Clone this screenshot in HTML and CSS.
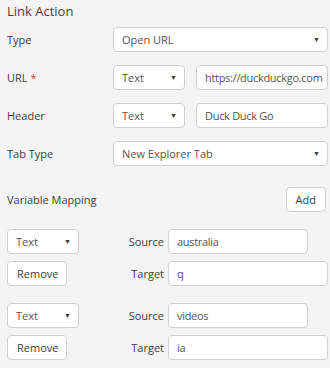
FILE: index.html
```html
<!DOCTYPE html>
<html lang="en">
<head>
    <meta charset="UTF-8">
    <meta name="viewport" content="width=device-width, initial-scale=1.0">
    <title>Link Action</title>
    <link rel="stylesheet" href="styles.css">
</head>
<body>
    <!-- Link action editor panel -->
    <div class="panel">
        <h2 class="panel-title">Link Action</h2>

        <div class="form-row">
            <label class="form-label">Type</label>
            <div class="select">
                <span class="select-value">Open URL</span>
                <span class="caret">&#9660;</span>
            </div>
        </div>

        <div class="form-row">
            <label class="form-label">URL <span class="required">*</span></label>
            <div class="pair">
                <div class="select select-small">
                    <span class="select-value">Text</span>
                    <span class="caret">&#9660;</span>
                </div>
                <input class="text-input" type="text" value="https://duckduckgo.com">
            </div>
        </div>

        <div class="form-row">
            <label class="form-label">Header</label>
            <div class="pair">
                <div class="select select-small">
                    <span class="select-value">Text</span>
                    <span class="caret">&#9660;</span>
                </div>
                <input class="text-input" type="text" value="Duck Duck Go">
            </div>
        </div>

        <div class="form-row">
            <label class="form-label">Tab Type</label>
            <div class="select">
                <span class="select-value">New Explorer Tab</span>
                <span class="caret">&#9660;</span>
            </div>
        </div>

        <!-- Variable mapping header -->
        <div class="mapping-header">
            <span class="form-label">Variable Mapping</span>
            <button class="btn">Add</button>
        </div>

        <!-- Mapping entries -->
        <div class="mapping">
            <div class="select select-small">
                <span class="select-value">Text</span>
                <span class="caret">&#9660;</span>
            </div>
            <span class="mapping-label">Source</span>
            <input class="text-input source-input" type="text" value="australia">
            <button class="btn">Remove</button>
            <span class="mapping-label">Target</span>
            <input class="text-input" type="text" value="q">
        </div>

        <div class="mapping">
            <div class="select select-small">
                <span class="select-value">Text</span>
                <span class="caret">&#9660;</span>
            </div>
            <span class="mapping-label">Source</span>
            <input class="text-input source-input" type="text" value="videos">
            <button class="btn">Remove</button>
            <span class="mapping-label">Target</span>
            <input class="text-input" type="text" value="ia">
        </div>
    </div>
</body>
</html>
```

FILE: styles.css
```css
/* Basic Reset */
* {
    margin: 0;
    padding: 0;
    box-sizing: border-box;
}

body {
    font-family: "Open Sans", "Noto Sans", sans-serif;
    font-size: 11px;
    color: #404040;
    background-color: #f4f4f4;
}

/* Panel */
.panel {
    padding: 2px 2px 0 7px;
}

.panel-title {
    font-size: 13px;
    font-weight: normal;
    color: #444444;
    line-height: 18px;
    margin-bottom: 7px;
}

/* Form rows */
.form-row {
    display: grid;
    grid-template-columns: 106px 1fr;
    align-items: center;
    margin-bottom: 13px;
}

.required {
    color: #e0413a;
}

.pair {
    display: grid;
    grid-template-columns: 72px 1fr;
    gap: 11px;
}

/* Fake select box */
.select {
    display: flex;
    align-items: center;
    justify-content: space-between;
    height: 25px;
    padding: 0 7px 0 8px;
    background-color: #ffffff;
    border: 1px solid #d0d0d0;
    border-radius: 4px;
    color: #555555;
}

.caret {
    font-size: 7px;
    color: #3a3a3a;
}

.text-input {
    height: 25px;
    width: 100%;
    padding: 0 4px 0 8px;
    font-family: inherit;
    font-size: inherit;
    letter-spacing: -0.3px;
    color: #555555;
    background-color: #ffffff;
    border: 1px solid #d0d0d0;
    border-radius: 4px;
    outline: none;
}

/* Buttons */
.btn {
    height: 25px;
    padding: 0 9px;
    font-family: inherit;
    font-size: inherit;
    color: #404040;
    background-color: #ffffff;
    border: 1px solid #d0d0d0;
    border-radius: 4px;
}

/* Variable mapping */
.mapping-header {
    display: flex;
    align-items: center;
    justify-content: space-between;
    padding-right: 2px;
    margin-top: 21px;
    margin-bottom: 17px;
}

.mapping {
    display: grid;
    grid-template-columns: 72px 1fr 160px;
    grid-auto-rows: 25px;
    row-gap: 7px;
    align-items: center;
    margin-bottom: 17px;
}

.mapping .btn {
    width: 60px;
}

.mapping-label {
    text-align: right;
    padding-right: 4px;
}

.source-input {
    width: 140px;
}
```
